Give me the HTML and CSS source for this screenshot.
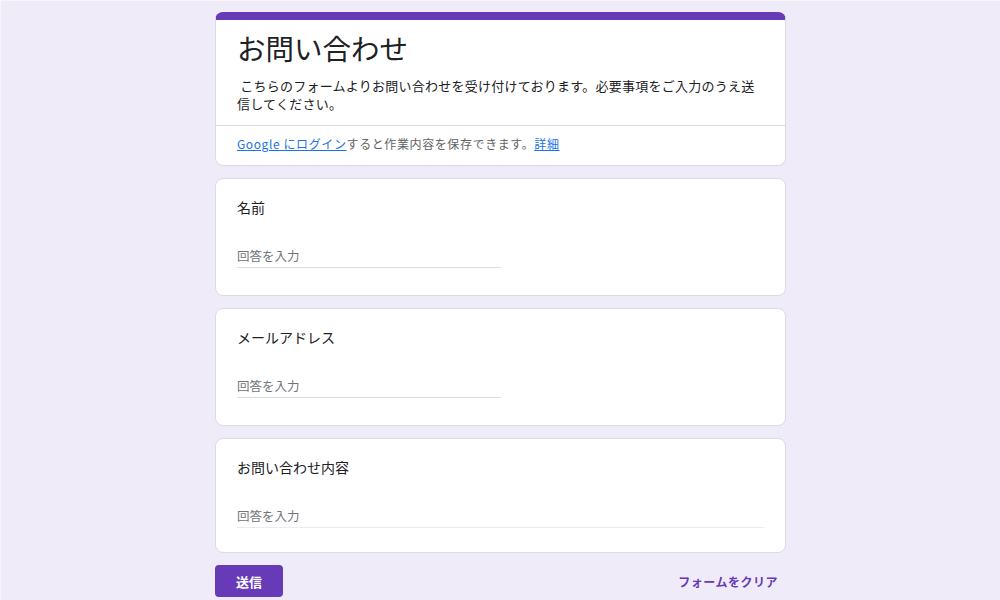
FILE: index.html
```html
<!DOCTYPE html>
<html lang="ja">
<head>
  <meta charset="UTF-8"/>
  <meta name="viewport" content="width=device-width, initial-scale=1.0"/>
  <title>お問い合わせ</title>
  <link rel="stylesheet" href="styles.css">
</head>
<body>
  <div class="form-wrap">
    <div class="card header-card">
      <div class="header-main">
        <h1 class="form-title">お問い合わせ</h1>
        <p class="form-desc">&nbsp;こちらのフォームよりお問い合わせを受け付けております。必要事項をご入力のうえ送信してください。</p>
      </div>
      <div class="login-note">
        <a href="#">Google にログイン</a>すると作業内容を保存できます。<a href="#">詳細</a>
      </div>
    </div>

    <div class="card question">
      <div class="q-label">名前</div>
      <input class="q-input short" type="text" placeholder="回答を入力">
    </div>

    <div class="card question">
      <div class="q-label">メールアドレス</div>
      <input class="q-input short" type="text" placeholder="回答を入力">
    </div>

    <div class="card question paragraph">
      <div class="q-label">お問い合わせ内容</div>
      <input class="q-input long" type="text" placeholder="回答を入力">
    </div>

    <div class="actions">
      <button class="submit-btn">送信</button>
      <a href="#" class="clear-link">フォームをクリア</a>
    </div>
  </div>
</body>
</html>
```

FILE: styles.css
```css
* {
  margin: 0;
  padding: 0;
  box-sizing: border-box;
}
html, body {
  height: 100%;
}
body {
  background-color: #f0ebf8;
  color: #202124;
  font-family: "Noto Sans CJK JP", "Noto Sans", Roboto, sans-serif;
  border-top: 1px solid #f6f5f8;
  border-left: 1px solid #f6f5f8;
  overflow: hidden;
}
.form-wrap {
  width: 571px;
  margin: 11px auto 0;
  display: flex;
  flex-direction: column;
  gap: 12px;
}
.card {
  background: #fff;
  border: 1px solid #dadce0;
  border-radius: 8px;
}
.header-card {
  border-top: 8px solid #673ab7;
}
.header-main {
  padding: 10px 21px 13px;
  border-bottom: 1px solid #dadce0;
}
.form-title {
  font-size: 28.5px;
  font-weight: 400;
  line-height: 36px;
  color: #202124;
}
.form-desc {
  margin-top: 11px;
  font-size: 13px;
  line-height: 17.5px;
  letter-spacing: 0.25px;
  color: #202124;
}
.login-note {
  padding: 9px 21px 12px;
  font-size: 12px;
  line-height: 18px;
  letter-spacing: 0.6px;
  color: #5f6368;
}
.login-note a {
  color: #1a73e8;
  text-decoration: underline;
}
.question {
  padding: 18px 21px 27px;
  display: flex;
  flex-direction: column;
}
.question.paragraph {
  padding-bottom: 24px;
}
.q-label {
  font-size: 14px;
  line-height: 20px;
  color: #202124;
}
.q-input {
  margin-top: 27px;
  height: 24px;
  border: none;
  border-bottom: 1px solid #dadce0;
  outline: none;
  font-family: inherit;
  font-size: 12.5px;
  color: #202124;
  background: transparent;
}
.q-input::placeholder {
  color: #70757a;
}
.q-input.short {
  width: 264px;
}
.q-input.long {
  width: 100%;
  border-bottom-color: #eceaf0;
}
.actions {
  display: flex;
  justify-content: space-between;
  align-items: center;
  padding-right: 8px;
}
.submit-btn {
  width: 68px;
  height: 32px;
  background: #673ab7;
  color: #fff;
  border: none;
  border-radius: 4px;
  font-family: inherit;
  font-size: 13px;
  font-weight: 700;
  cursor: pointer;
}
.clear-link {
  color: #673ab7;
  font-size: 12px;
  font-weight: 700;
  letter-spacing: 0.5px;
  text-decoration: none;
}
```
